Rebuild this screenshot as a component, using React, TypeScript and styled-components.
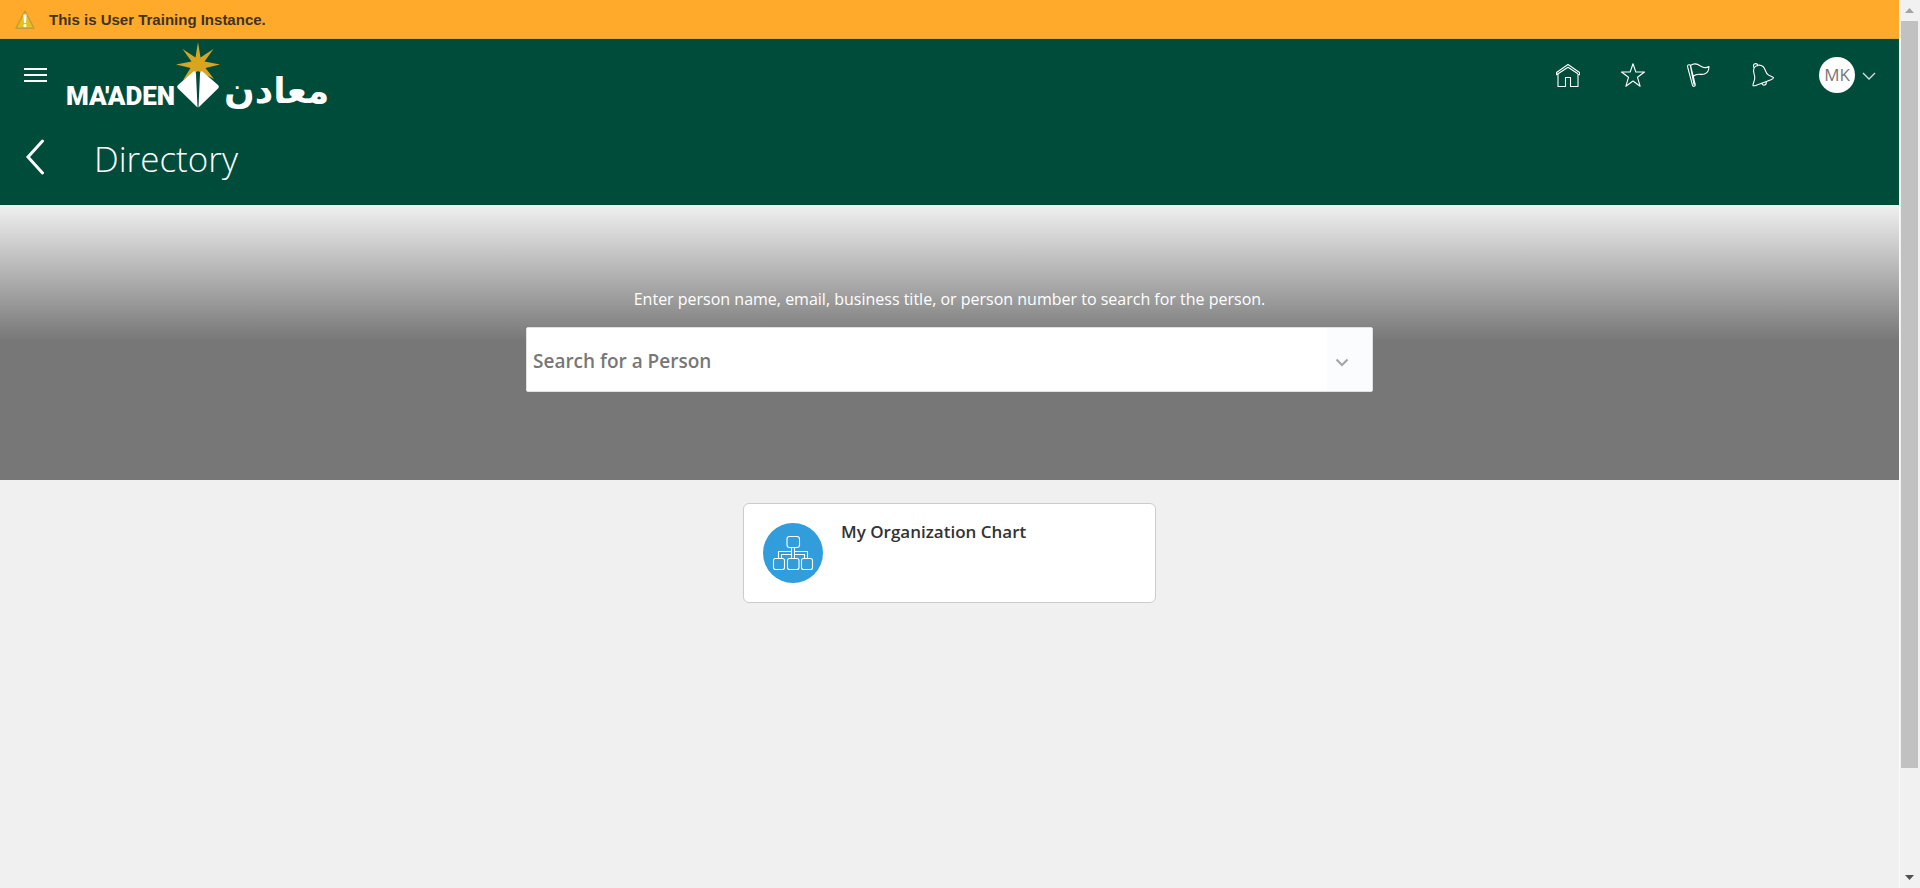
import React from "react";
import styled, { createGlobalStyle } from "styled-components";

const ui = '"Open Sans", "Noto Sans", sans-serif';

const GlobalStyle = createGlobalStyle`
  *, *::before, *::after { box-sizing: border-box; }
  body { margin: 0; background: #f0f0f0; font-family: ${ui}; color: #333; }
  h1, h2, p { margin: 0; font-weight: inherit; }
  button { border: 0; padding: 0; background: none; font: inherit; color: inherit; cursor: pointer; }
  svg { flex: none; }
`;

const Shell = styled.div`
  display: flex;
  min-height: 100vh;
`;

const Page = styled.div`
  flex: 1;
  min-width: 0;
`;

const Notice = styled.div`
  display: flex;
  align-items: center;
  gap: 14px;
  height: 39px;
  padding: 1px 0 0 15px;
  border-bottom: 1px solid #d9a842;
  background: #ffaa2b;
  color: #3d3322;
  font: bold 15px/20px "Liberation Sans", Arial, sans-serif;
`;

const Header = styled.header`
  background: #004c3b;
  color: #fff;
`;

const TopBar = styled.div`
  display: flex;
  align-items: center;
  height: 71px;
  padding: 0 23px;
`;

const IconButton = styled.button`
  display: flex;
  align-items: center;
  justify-content: center;
  width: 24px;
  height: 24px;
`;

const Brand = styled.a`
  display: flex;
  align-items: flex-end;
  gap: 4px;
  height: 69px;
  margin-left: 19px;
  color: #fff;
  text-decoration: none;
`;

const BrandLatin = styled.span`
  width: 106px;
  white-space: nowrap;
  font: 900 26px/26px Roboto, "Liberation Sans", sans-serif;
`;

const BrandArabic = styled.span`
  white-space: nowrap;
  font: bold 36px/36px "DejaVu Sans", sans-serif;
`;

const Actions = styled.nav`
  display: flex;
  align-items: center;
  gap: 41px;
  margin-left: auto;
`;

const Account = styled.button`
  display: flex;
  align-items: center;
  gap: 7px;
  margin-left: 44px;
`;

const Avatar = styled.span`
  width: 36px;
  height: 36px;
  border-radius: 50%;
  background: #fff;
  color: #777;
  font-size: 17px;
  line-height: 36px;
  text-align: center;
`;

const TitleRow = styled.div`
  display: flex;
  align-items: center;
  gap: 47px;
  height: 95px;
  padding: 0 0 2px 23px;
`;

const Title = styled.h1`
  padding-top: 4px;
  font-size: 35px;
  line-height: 48px;
  font-weight: 300;
`;

const Hero = styled.section`
  display: flex;
  flex-direction: column;
  align-items: center;
  gap: 16px;
  height: 275px;
  padding: 82px 24px 0;
  background: linear-gradient(#f0f0f0, #777 136px);
`;

const Hint = styled.label`
  color: #fff;
  font-size: 16px;
  line-height: 24px;
`;

const SearchBox = styled.div`
  display: flex;
  width: 100%;
  max-width: 847px;
  height: 65px;
  border: 1px solid #dfe0e2;
  border-radius: 2px;
  background: #fff;
  overflow: hidden;
`;

const SearchInput = styled.input`
  flex: 1;
  min-width: 0;
  border: 0;
  outline: 0;
  padding: 2px 6px 0;
  font: 600 19px/26px ${ui};
  color: #333;
  &::placeholder { color: #777; opacity: 1; }
`;

const SearchToggle = styled.button`
  display: flex;
  align-items: center;
  justify-content: center;
  width: 45px;
  padding: 7px 15px 0 0;
  background: #fbfcfe;
`;

const Cards = styled.main`
  display: flex;
  justify-content: center;
  padding: 23px 24px;
`;

const Card = styled.a`
  display: flex;
  gap: 18px;
  width: 413px;
  height: 100px;
  padding: 19px;
  border: 1px solid #ccc;
  border-radius: 6px;
  background: #fff;
  color: #333;
  text-decoration: none;
`;

const CardTitle = styled.h2`
  font-size: 17px;
  line-height: 18px;
  font-weight: 600;
`;

const Scrollbar = styled.div`
  display: flex;
  flex-direction: column;
  width: 21px;
  padding-left: 1px;
  border-left: 1px solid #fafafa;
  background: #f1f1f1;
`;

const ScrollArrow = styled.div`
  display: flex;
  align-items: center;
  justify-content: center;
  width: 17px;
  height: 21px;
`;

const ScrollTrack = styled.div`
  flex: 1;
  width: 17px;
`;

const ScrollThumb = styled.div`
  height: 88.3%;
  background: #c1c1c1;
`;

const thin = {
  fill: "none",
  stroke: "#fff",
  strokeWidth: 1.1,
  strokeLinejoin: "round" as const,
  strokeLinecap: "round" as const,
};

const WarningIcon = () => (
  <svg width="20" height="20" viewBox="0 0 20 20">
    <path d="M10 1.2 19 18.2H1Z" fill="#e6c022" stroke="#c99a35" strokeWidth="1.4" strokeLinejoin="round" />
    <path d="M8.4 4.500h3.200l-.6 8.500H9Z" fill="#fff" />
    <circle cx="10" cy="15.600" r="1.600" fill="#fff" />
  </svg>
);

const LogoMark = () => (
  <svg width="44" height="66" viewBox="0 0 44 66">
    <path
      d="M22 -1 24.500 14.500 37.500 6 28.500 18.500 44 21.500 29.500 25 38 36 22 28 7 37 14.500 25 0 21.500 15.500 18.500 6.500 6 19.500 14.500Z"
      fill="#d9a420"
    />
    <path d="M17.500 28.500Q20 27.500 20 31L21.500 64.500 1.500 45Q.5 43.500 2 42Z" fill="#fff" />
    <path d="M26.500 28.500Q24 27.500 24 31L22.500 64.500 42.500 45Q43.500 43.500 42 42Z" fill="#fff" />
  </svg>
);

const actions = [
  {
    name: "Home",
    drawing: <path d="M.5 9.500 12 1.500 23.500 9.500v2.200L12 4.200.5 11.700ZM2 11.500v12h7.500v-9h5v9H22v-12" />,
  },
  {
    name: "Favorites",
    drawing: <path d="M12 .8 14.800 9h8.700l-7 5.300 2.600 8.900L12 18l-7.100 5.200 2.600-8.900L.5 9h8.700Z" />,
  },
  {
    name: "Watchlist",
    drawing: (
      <path d="M1.500 3.500C1.300 1.800 4 1 4.600 2.800L9.200 21.500C9.500 23.500 7 24 6.500 22.300ZM4.300 2.500 8 21.500M4.600 2.500C8.500-.5 12 1.200 14.500 3 17.500 5 20.500 5 23 3.500 23 8 21 10 18.500 11 14.500 12.500 12 9.500 7.500 13" />
    ),
  },
  {
    name: "Notifications",
    drawing: (
      <>
        <path d="M3 5C5 2 9 1 12 3.500 15 6 13.800 10 17.500 12L22.500 14.500C22.300 16 21 16.300 20 16.700L4 22.800 2 22.800C1.500 20 4.500 18 3.700 13.500 3 10 1.800 8 3 5Z" />
        <path d="M3 4.500C1.800 2.500 2.800.6 4.500.6S6.800 1.500 6.500 2.800M11 20.300C11.500 23.300 15.800 22.500 15.300 18.700" />
      </>
    ),
  },
];

const OrgChartIcon = () => (
  <svg width="60" height="60" viewBox="0 0 60 60">
    <circle cx="30" cy="30" r="30" fill="#319ddb" />
    <g {...thin}>
      <rect x="24" y="13.500" width="12.500" height="11" rx="2.500" />
      <rect x="10.500" y="35.500" width="11" height="11" rx="2" />
      <rect x="24.500" y="35.500" width="11.500" height="11" rx="2" />
      <rect x="38.500" y="35.500" width="11" height="11" rx="2" />
      <path d="M28.500 24.500v4h-13v7M31.500 24.500v4h13v7M18.500 35.500v-4h10v4M31.500 35.500v-4h10v4M28.500 28.500v3M31.500 28.500v3" />
    </g>
  </svg>
);

export default function App() {
  return (
    <>
      <GlobalStyle />
      <Shell>
        <Page>
          <Notice role="status">
            <WarningIcon />
            <span>This is User Training Instance.</span>
          </Notice>
          <Header>
            <TopBar>
              <IconButton aria-label="Navigator">
                <svg width="24" height="16" viewBox="0 0 24 16">
                  <path d="M1 2h23M1 8h23M1 14h23" stroke="#fff" strokeWidth="2" />
                </svg>
              </IconButton>
              <Brand href="#">
                <BrandLatin>MA'ADEN</BrandLatin>
                <LogoMark />
                <BrandArabic lang="ar" dir="rtl">معادن</BrandArabic>
              </Brand>
              <Actions>
                {actions.map((action) => (
                  <IconButton key={action.name} aria-label={action.name}>
                    <svg width="24" height="24" viewBox="0 0 24 24" {...thin}>{action.drawing}</svg>
                  </IconButton>
                ))}
              </Actions>
              <Account aria-label="Settings and actions for MK">
                <Avatar>MK</Avatar>
                <svg width="14" height="10" viewBox="0 0 14 10">
                  <path d="m1 3 6 6 6-6" fill="none" stroke="#d5e2df" strokeWidth="1.3" />
                </svg>
              </Account>
            </TopBar>
            <TitleRow>
              <IconButton aria-label="Back">
                <svg width="20" height="36" viewBox="0 0 20 36">
                  <path d="M17.500 2 3 18l14.500 16" fill="none" stroke="#fff" strokeWidth="3" strokeLinecap="round" />
                </svg>
              </IconButton>
              <Title>Directory</Title>
            </TitleRow>
          </Header>
          <Hero>
            <Hint htmlFor="person">
              Enter person name, email, business title, or person number to search for the person.
            </Hint>
            <SearchBox>
              <SearchInput id="person" type="text" placeholder="Search for a Person" />
              <SearchToggle aria-label="Show options">
                <svg width="14" height="10" viewBox="0 0 14 10">
                  <path d="m1.500 1.500 5.500 5.500 5.500-5.500" fill="none" stroke="#a6a6a8" strokeWidth="2.200" />
                </svg>
              </SearchToggle>
            </SearchBox>
          </Hero>
          <Cards>
            <Card href="#">
              <OrgChartIcon />
              <CardTitle>My Organization Chart</CardTitle>
            </Card>
          </Cards>
        </Page>
        <Scrollbar aria-hidden="true">
          <ScrollArrow>
            <svg width="9" height="5" viewBox="0 0 9 5"><path d="M0 5 4.500 0 9 5Z" fill="#a3a3a3" /></svg>
          </ScrollArrow>
          <ScrollTrack>
            <ScrollThumb />
          </ScrollTrack>
          <ScrollArrow>
            <svg width="9" height="5" viewBox="0 0 9 5"><path d="M0 0 4.500 5 9 0Z" fill="#505050" /></svg>
          </ScrollArrow>
        </Scrollbar>
      </Shell>
    </>
  );
}
